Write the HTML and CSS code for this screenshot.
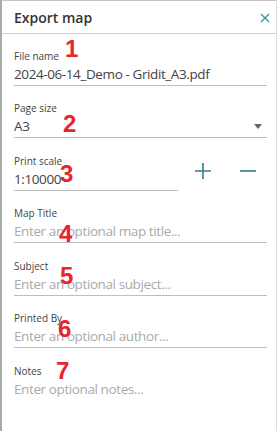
FILE: index.html
```html
<!DOCTYPE html>
<html>
<head>
    <title>Export map</title>
    <link rel="stylesheet" href="styles.css">
</head>
<body>
    <div class="panel">
        <div class="panel-header">
            <span class="panel-title">Export map</span>
            <svg class="close" width="10" height="10" viewBox="0 0 10 10">
                <path d="M1 1 L9 9 M9 1 L1 9" stroke="#3d8e9c" stroke-width="1.2" fill="none"/>
            </svg>
        </div>
        <div class="panel-body">
            <div class="field">
                <label>File name</label>
                <div class="value">2024-06-14_Demo - Gridit_A3.pdf</div>
                <span class="mark mark-1">1</span>
            </div>
            <div class="field">
                <label>Page size</label>
                <div class="value select">
                    <span>A3</span>
                    <svg width="8" height="5" viewBox="0 0 8 5"><path d="M0 0 H8 L4 5 Z" fill="#666"/></svg>
                </div>
                <span class="mark mark-2">2</span>
            </div>
            <div class="field scale-row">
                <div class="scale-input">
                    <label>Print scale</label>
                    <div class="value">1:10000</div>
                    <span class="mark mark-3">3</span>
                </div>
                <div class="scale-buttons">
                    <svg width="18" height="18" viewBox="0 0 18 18"><path d="M1 9 H17 M9 1 V17" stroke="#2f7f8c" stroke-width="1.6" fill="none"/></svg>
                    <svg width="18" height="18" viewBox="0 0 18 18"><path d="M1 9 H17" stroke="#2f7f8c" stroke-width="1.6" fill="none"/></svg>
                </div>
            </div>
            <div class="field">
                <label>Map Title</label>
                <div class="value placeholder">Enter an optional map title...</div>
                <span class="mark mark-4">4</span>
            </div>
            <div class="field">
                <label>Subject</label>
                <div class="value placeholder">Enter an optional subject...</div>
                <span class="mark mark-5">5</span>
            </div>
            <div class="field">
                <label>Printed By</label>
                <div class="value placeholder">Enter an optional author...</div>
                <span class="mark mark-6">6</span>
            </div>
            <div class="field">
                <label>Notes</label>
                <div class="value placeholder no-line">Enter optional notes...</div>
                <span class="mark mark-7">7</span>
            </div>
        </div>
    </div>
</body>
</html>
```
FILE: styles.css
```css
body {
    margin: 0;
    padding: 0;
    font-family: "Open Sans", "Noto Sans", sans-serif;
    background-color: #fff;
}

.panel {
    box-sizing: border-box;
    width: 277px;
    height: 431px;
    border-top: 1px solid #c4c4c4;
    border-left: 2px solid #a9a9a9;
    border-right: 1px solid #dcdcdc;
    overflow: hidden;
}

.panel-header {
    height: 32px;
    border-bottom: 1px solid #cfcfcf;
    display: flex;
    align-items: center;
    justify-content: space-between;
    padding: 0 6px 0 12px;
}

.panel-title {
    font-size: 14px;
    font-weight: 600;
    color: #333;
}

.close {
    margin-top: 2px;
}

.panel-body {
    padding: 14.5px 9px 0 12px;
}

.field {
    position: relative;
    margin-bottom: 15.5px;
}

.field label {
    display: block;
    font-size: 10px;
    line-height: 14px;
    color: #444;
}

.value {
    font-size: 13.5px;
    letter-spacing: -0.4px;
    line-height: 22px;
    color: #444;
    border-bottom: 1px solid #bdbdbd;
}

.value.select {
    display: flex;
    align-items: center;
    justify-content: space-between;
    padding-right: 5px;
}

.placeholder {
    color: #aaa;
}

.no-line {
    border-bottom: none;
}

.scale-row {
    display: flex;
    align-items: flex-start;
}

.scale-input {
    position: relative;
    width: 164px;
}

.scale-buttons {
    display: flex;
    gap: 27px;
    margin-left: 16px;
    margin-top: 8.5px;
}

.mark {
    position: absolute;
    font-family: "Liberation Sans", Arial, sans-serif;
    font-weight: bold;
    font-size: 24px;
    line-height: 24px;
    color: #e8242c;
}

.mark-1 { left: 51px; top: -11.5px; }
.mark-2 { left: 49px; top: 11px; }
.mark-3 { left: 46px; top: 8.5px; }
.mark-4 { left: 45px; top: 16px; }
.mark-5 { left: 46px; top: 5.5px; }
.mark-6 { left: 44px; top: 6px; }
.mark-7 { left: 42px; top: -4.5px; }
```
